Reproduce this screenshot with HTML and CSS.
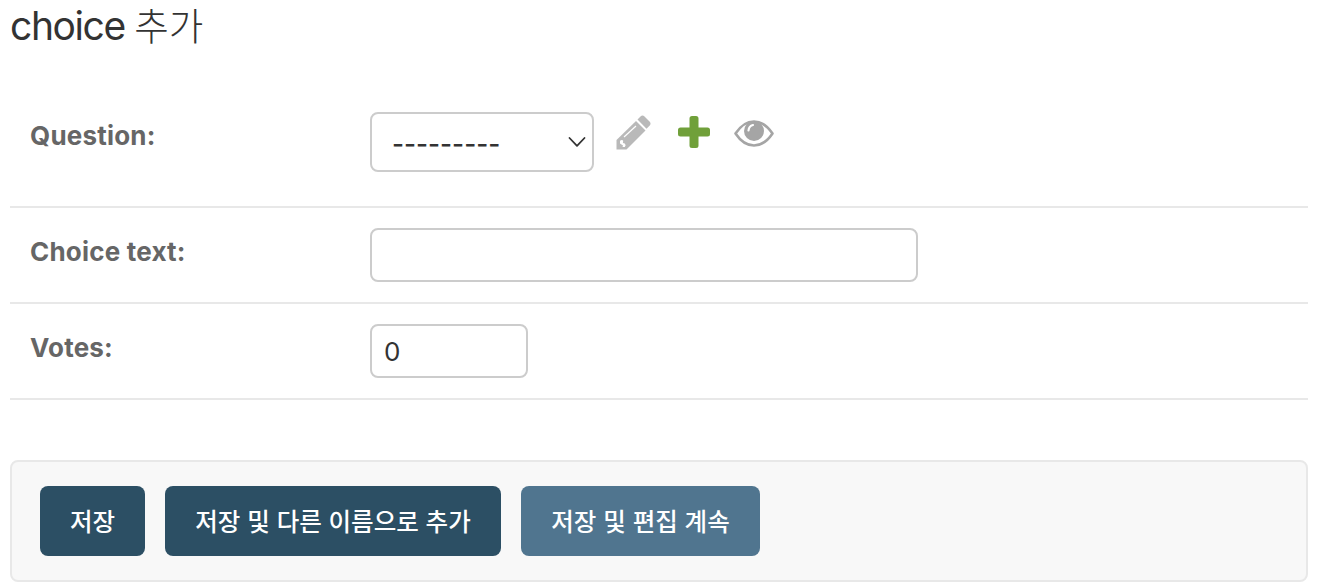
FILE: index.html
```html
<!DOCTYPE html>
<html lang="ko">

<head>
    <meta charset="UTF-8">
    <meta name="viewport" content="width=device-width, initial-scale=1.0">
    <title>choice 추가</title>
    <link rel="stylesheet" href="styles.css">
</head>

<body>
    <div id="content">
        <h1>choice <span class="ko">추가</span></h1>
        <form>
            <fieldset class="module">
                <div class="form-row field-question">
                    <label for="id_question">Question:</label>
                    <div class="related-widget-wrapper">
                        <div class="select-box">
                            <select id="id_question">
                                <option value="">---------</option>
                            </select>
                            <svg class="arrow" width="20" height="12" viewBox="0 0 20 12">
                                <path d="M2.500 2L10 9.800L17.500 2" fill="none" stroke="#333" stroke-width="1.800" stroke-linecap="round" stroke-linejoin="round"/>
                            </svg>
                        </div>
                        <svg class="icon-change" width="36" height="36" viewBox="0 0 36 36">
                            <path d="M.500 34.500V25L20 6L29.500 15.500L10.500 34.500Z" fill="#b9b9b9"/>
                            <path d="M21.500 4.500L24.500 1.500Q26.500 -.300 28.500 1.500L33.500 6.500Q35.500 8.700 33.500 10.700L30.500 13.700Z" fill="#b9b9b9"/>
                            <path d="M8 22L20 11" stroke="#fff" stroke-width="1.200"/>
                            <path d="M4 25.800Q6.300 24.300 7.300 26Q6 28 8.800 28.500Q10.500 30 8.800 32H6.500L7 30.500L4 28.500Z" fill="#fff"/>
                        </svg>
                        <svg class="icon-add" width="32" height="32" viewBox="0 0 32 32">
                            <path d="M14 0H18Q20.500 0 20.500 2.500V11.500H29.500Q32 11.500 32 14V18Q32 20.500 29.500 20.500H20.500V29.500Q20.500 32 18 32H14Q11.500 32 11.500 29.500V20.500H2.500Q0 20.500 0 18V14Q0 11.500 2.500 11.500H11.500V2.500Q11.500 0 14 0Z" fill="#70a03a"/>
                        </svg>
                        <svg class="icon-view" width="40" height="28" viewBox="0 0 40 28">
                            <path d="M1.500 13.500Q9.500 1.500 20 1.500T38.500 13.500Q30.500 25.500 20 25.500T1.500 13.500Z" fill="none" stroke="#a5a5a5" stroke-width="2.600" stroke-linejoin="round"/>
                            <circle cx="20" cy="11" r="10" fill="#a5a5a5"/>
                            <path d="M14.500 10.500Q15 6 19 5" fill="none" stroke="#fff" stroke-width="2.200" stroke-linecap="round"/>
                        </svg>
                    </div>
                </div>
                <div class="form-row">
                    <label for="id_choice_text">Choice text:</label>
                    <input type="text" id="id_choice_text" class="text-field">
                </div>
                <div class="form-row">
                    <label for="id_votes">Votes:</label>
                    <input type="text" id="id_votes" class="integer-field" value="0">
                </div>
            </fieldset>
            <div class="submit-row">
                <button type="button" class="save">저장</button>
                <button type="button" class="add-another">저장 및 다른 이름으로 추가</button>
                <button type="button" class="continue">저장 및 편집 계속</button>
            </div>
        </form>
    </div>
</body>

</html>
```

FILE: styles.css
```css
* {
    box-sizing: border-box;
}

body {
    margin: 0;
    background: #fff;
    color: #333;
    font-family: Inter, "Noto Sans CJK KR", sans-serif;
    font-size: 26px;
}

#content {
    padding: 0 12px 0 10px;
}

h1 {
    height: 52px;
    margin: 0 0 40px;
    font-size: 39px;
    font-weight: 400;
    line-height: 52px;
    letter-spacing: -1.4px;
    white-space: nowrap;
}

h1 .ko {
    font-size: 37.5px;
    font-weight: 200;
    letter-spacing: 0;
}

.module {
    margin: 0 0 60px;
    padding: 0;
    border: 0;
}

.form-row {
    display: flex;
    align-items: flex-start;
    height: 96px;
    padding: 20px;
    border-bottom: 2px solid #e8e8e8;
}

.field-question {
    height: 116px;
}

label {
    width: 340px;
    padding-top: 8px;
    color: #666;
    font-weight: 700;
    line-height: 32px;
    letter-spacing: 0.2px;
}

.related-widget-wrapper {
    display: flex;
    align-items: flex-start;
}

.select-box {
    position: relative;
}

select,
input {
    border: 2px solid #ccc;
    border-radius: 8px;
    background: #fff;
    color: #333;
    font-family: Inter, sans-serif;
    font-size: 26px;
}

select {
    display: block;
    width: 224px;
    height: 60px;
    padding: 2px 20px 0;
    appearance: none;
    font-weight: 500;
}

/* 선택 상자 화살표 */
.arrow {
    position: absolute;
    top: 24px;
    right: 7px;
    pointer-events: none;
}

.icon-change {
    margin: 3px 0 0 22px;
}

.icon-add {
    margin: 4px 0 0 26px;
}

.icon-view {
    margin: 8px 0 0 24px;
}

input {
    height: 54px;
    padding: 0 12px;
}

.text-field {
    width: 548px;
}

.integer-field {
    width: 158px;
}

.submit-row {
    display: flex;
    gap: 20px;
    height: 122px;
    padding: 24px 28px;
    border: 2px solid #e8e8e8;
    border-radius: 8px;
    background: #f8f8f8;
}

button {
    height: 70px;
    padding: 0 0 2px;
    border: 0;
    border-radius: 8px;
    background: #2c4f64;
    color: #fff;
    font-family: "Noto Sans CJK KR", sans-serif;
    font-size: 24.5px;
    font-weight: 500;
    white-space: nowrap;
}

.save {
    width: 105px;
}

.add-another {
    width: 336px;
}

.continue {
    width: 239px;
    background: #50758f;
}
```
